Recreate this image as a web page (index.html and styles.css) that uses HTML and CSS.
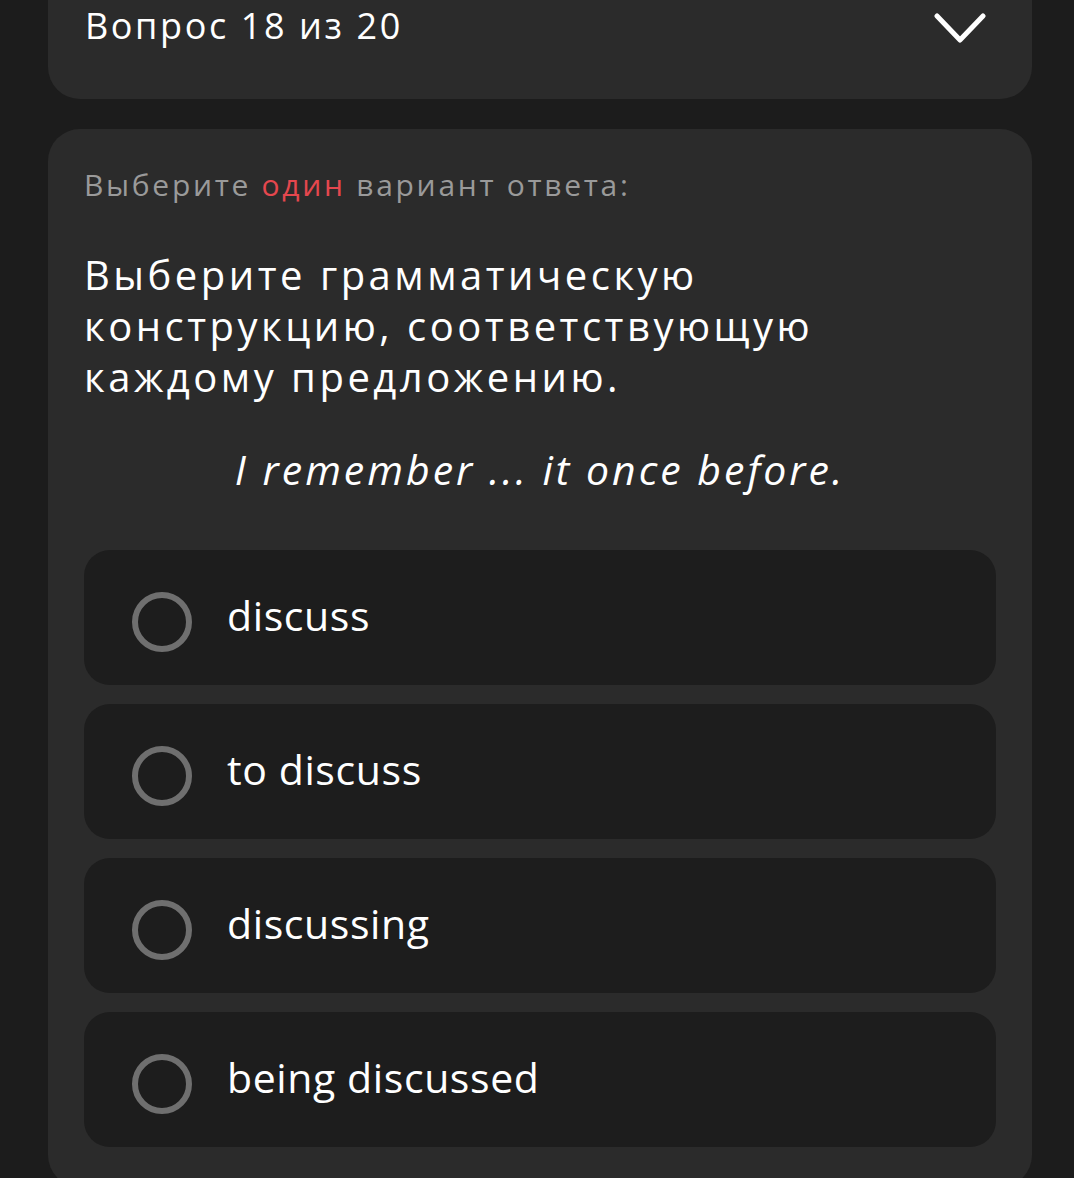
FILE: index.html
```html
<!DOCTYPE html>
<html lang="ru">
<head>
    <meta charset="UTF-8">
    <meta name="viewport" content="width=device-width, initial-scale=1.0">
    <title>Тест</title>
    <link rel="stylesheet" href="styles.css">
</head>
<body>
    <div class="page">
        <!-- Question counter -->
        <div class="card counter">
            <span class="counter-title">Вопрос 18 из 20</span>
            <svg class="chevron" width="52" height="32" viewBox="0 0 52 32">
                <polyline points="3,3 26,27 49,3" fill="none" stroke="#fff" stroke-width="5" stroke-linecap="round" stroke-linejoin="round"/>
            </svg>
        </div>

        <!-- Question -->
        <div class="card question">
            <p class="hint">Выберите <span class="hint-accent">один</span> вариант ответа:</p>
            <p class="question-text">Выберите грамматическую конструкцию, соответствующую каждому предложению.</p>
            <p class="sentence">I remember ... it once before.</p>

            <div class="options">
                <label class="option"><span class="radio"></span><span class="option-text">discuss</span></label>
                <label class="option"><span class="radio"></span><span class="option-text">to discuss</span></label>
                <label class="option"><span class="radio"></span><span class="option-text">discussing</span></label>
                <label class="option"><span class="radio"></span><span class="option-text">being discussed</span></label>
            </div>
        </div>
    </div>
</body>
</html>
```

FILE: styles.css
```css
body {
    margin: 0;
    background-color: #1c1c1c;
    font-family: "Open Sans", Lato, sans-serif;
    color: #fff;
    overflow: hidden;
}
.page {
    padding: 0 42px 0 48px;
    display: flex;
    flex-direction: column;
    gap: 30px;
}
.card {
    background-color: #2b2b2b;
    border-radius: 32px;
}
/* Counter card (scrolled partly off the top) */
.counter {
    margin-top: -40px;
    padding: 40px 46px 47px 37px;
    display: flex;
    align-items: flex-start;
    justify-content: space-between;
}
.counter-title {
    font-size: 36px;
    line-height: 52px;
    letter-spacing: 2.6px;
}
.chevron {
    display: block;
    margin-top: 13px;
}
/* Question card */
.question {
    padding: 36px 36px 40px;
}
.hint {
    margin: 0;
    font-size: 30px;
    line-height: 40px;
    letter-spacing: 2.7px;
    color: #9a9a9a;
}
.hint-accent {
    color: #e5474e;
}
.question-text {
    margin: 44px 0 0;
    font-size: 40px;
    line-height: 51px;
    letter-spacing: 3.5px;
}
.sentence {
    margin: 41px 0 0;
    font-size: 41px;
    line-height: 52px;
    letter-spacing: 3px;
    font-style: italic;
    text-align: center;
}
.options {
    margin-top: 55px;
    display: flex;
    flex-direction: column;
    gap: 19px;
}
.option {
    height: 126px;
    padding: 9px 0 0 48px;
    background-color: #1d1d1d;
    border-radius: 26px;
    display: flex;
    align-items: center;
    gap: 35px;
}
.radio {
    width: 48px;
    height: 48px;
    border: 6px solid #6f6f6f;
    border-radius: 50%;
    flex-shrink: 0;
}
.option-text {
    font-size: 41px;
    letter-spacing: 0.6px;
    margin-top: -14px;
}
```
